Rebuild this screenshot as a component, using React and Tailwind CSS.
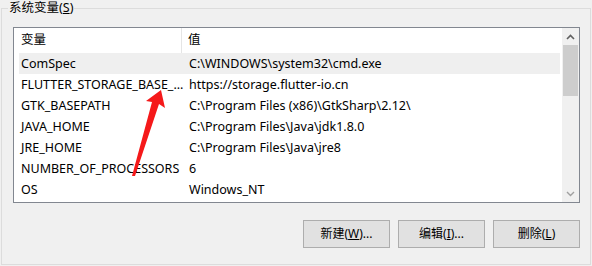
import React from "react";

const rows = [
  ["ComSpec", "C:\\WINDOWS\\system32\\cmd.exe"],
  ["FLUTTER_STORAGE_BASE_...", "https://storage.flutter-io.cn"],
  ["GTK_BASEPATH", "C:\\Program Files (x86)\\GtkSharp\\2.12\\"],
  ["JAVA_HOME", "C:\\Program Files\\Java\\jdk1.8.0"],
  ["JRE_HOME", "C:\\Program Files\\Java\\jre8"],
  ["NUMBER_OF_PROCESSORS", "6"],
  ["OS", "Windows_NT"],
];

function Btn({ children }) {
  return (
    <div className="w-[87px] h-[28px] bg-[#e1e1e1] border border-[#adadad] flex items-center justify-center text-[12px] text-black">
      {children}
    </div>
  );
}

export default function App() {
  return (
    <div
      className="relative w-[592px] h-[266px] bg-[#f0f0f0] overflow-hidden text-black"
      style={{ fontFamily: '"Noto Sans", "Noto Sans CJK SC", sans-serif' }}
    >
      <div className="pt-[8px] pl-[1px]">
        <div className="relative w-[590px] h-[257px] border border-[#dcdcdc] pl-[11px] pt-[18px]">
          <div className="absolute left-[6px] top-[-9px] px-[1px] bg-[#f0f0f0] text-[12.5px] leading-[16px]">
            系统变量(<span className="underline">S</span>)
          </div>
          <div className="w-[567px] h-[176px] border border-[#828790] bg-white flex">
            <div className="w-[547px] flex flex-col">
              <div className="h-[25px] flex text-[12.5px] items-center">
                <div className="w-[168px] pl-[7px] h-full flex items-center border-r border-[#e5e5e5]">变量</div>
                <div className="pl-[6px]">值</div>
              </div>
              {rows.map((r, i) => (
                <div
                  key={i}
                  className={`h-[21px] ml-[5px] mr-[1px] flex items-center text-[12.5px] whitespace-nowrap ${i === 0 ? "bg-[#efefef]" : ""}`}
                >
                  <div className="w-[168px] pl-[2px] pt-[1px]">{r[0]}</div>
                  <div className="pl-[2px] pt-[1px]">{r[1]}</div>
                </div>
              ))}
            </div>
            <div className="w-[17px] ml-[1px] bg-[#f0f0f0] flex flex-col items-center">
              <div className="h-[17px] flex items-center justify-center">
                <svg width="9" height="6" viewBox="0 0 9 6">
                  <path d="M1 5 L4.5 1.5 L8 5" stroke="#606060" strokeWidth="1.6" fill="none" />
                </svg>
              </div>
              <div className="w-[15px] h-[51px] bg-[#cdcdcd]" />
              <div className="flex-1" />
              <div className="h-[17px] flex items-center justify-center">
                <svg width="9" height="6" viewBox="0 0 9 6">
                  <path d="M1 1 L4.5 4.5 L8 1" stroke="#a0a0a0" strokeWidth="1.4" fill="none" />
                </svg>
              </div>
            </div>
          </div>
          <div className="mt-[17px] w-[567px] flex justify-end gap-[8px]">
            <Btn>新建(<span className="underline">W</span>)...</Btn>
            <Btn>编辑(<span className="underline">I</span>)...</Btn>
            <Btn>删除(<span className="underline">L</span>)</Btn>
          </div>
        </div>
      </div>
      <svg className="absolute left-0 top-0" width="592" height="266" viewBox="0 0 592 266">
        <polygon
          points="161,90 146,101 152,102 132,176 135,176 159,104 165,108"
          fill="#f5191a"
        />
      </svg>
    </div>
  );
}
